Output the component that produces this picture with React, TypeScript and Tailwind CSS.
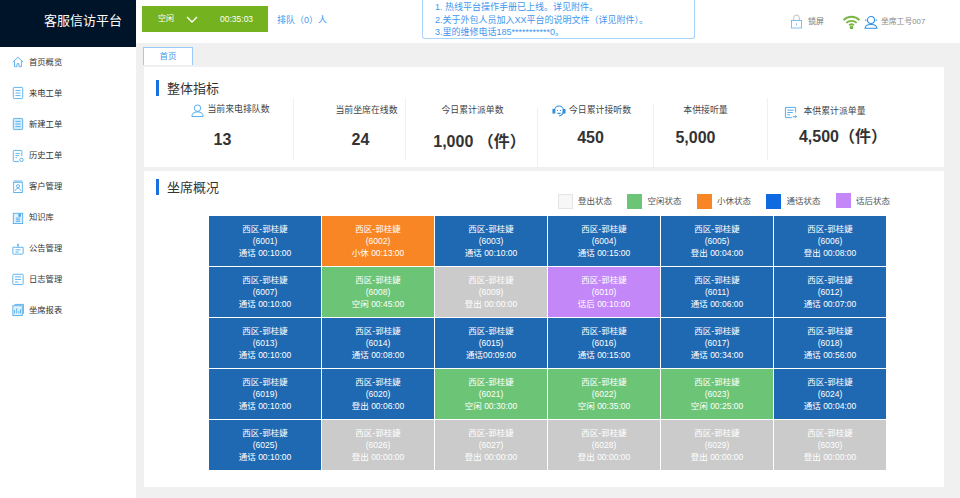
import type { ReactNode } from 'react';

const FONT = 'font-["Liberation_Sans","Noto_Sans_CJK_SC",sans-serif]';

type Status = 'call' | 'rest' | 'idle' | 'off' | 'after';

const cellBg: Record<Status, string> = {
  call: 'bg-[#1f69b3]',
  rest: 'bg-[#f98625]',
  idle: 'bg-[#6cc576]',
  off: 'bg-[#cbcbcb]',
  after: 'bg-[#c387f8]',
};

const seats: [Status, string][] = [
  ['call', '通话 00:10:00'],
  ['rest', '小休 00:13:00'],
  ['call', '通话 00:10:00'],
  ['call', '通话 00:15:00'],
  ['call', '登出 00:04:00'],
  ['call', '登出 00:08:00'],
  ['call', '通话 00:10:00'],
  ['idle', '空闲 00:45:00'],
  ['off', '登出 00:00:00'],
  ['after', '话后 00:10:00'],
  ['call', '通话 00:06:00'],
  ['call', '通话 00:07:00'],
  ['call', '通话 00:10:00'],
  ['call', '通话 00:08:00'],
  ['call', '通话00:09:00'],
  ['call', '通话 00:15:00'],
  ['call', '通话 00:34:00'],
  ['call', '通话 00:56:00'],
  ['call', '通话 00:10:00'],
  ['call', '登出 00:06:00'],
  ['idle', '空闲 00:30:00'],
  ['idle', '空闲 00:35:00'],
  ['idle', '空闲 00:25:00'],
  ['call', '通话 00:04:00'],
  ['call', '通话 00:10:00'],
  ['off', '登出 00:00:00'],
  ['off', '登出 00:00:00'],
  ['off', '登出 00:00:00'],
  ['off', '登出 00:00:00'],
  ['off', '登出 00:00:00'],
];

function NavIcon({ children }: { children: ReactNode }) {
  return (
    <svg viewBox="0 0 14 16" fill="none" stroke="#4aa8ec" strokeWidth="1" className="w-[12px] h-[14px] shrink-0">
      {children}
    </svg>
  );
}

const navIcons: ReactNode[] = [
  <path d="M1 8 7 2.500 13 8M3 7v6.500h2.800V10h2.400v3.500H11V7" />,
  <>
    <rect x="1.500" y="1.500" width="11" height="13" rx="1" />
    <path d="M4 5h6M4 8h6M4 11h6" />
  </>,
  <>
    <rect x="1.500" y="1.500" width="11" height="13" rx="1" fill="#d5ebfb" />
    <path d="M4 5h6M4 8h6M4 11h6" />
  </>,
  <>
    <path d="M8 14.500H2.500a1 1 0 0 1-1-1v-11a1 1 0 0 1 1-1h8a1 1 0 0 1 1 1V8" />
    <path d="M4 5h5M4 7.500h4M4 10h2" />
    <circle cx="11" cy="12.500" r="2" />
  </>,
  <>
    <rect x="2" y="2.500" width="10" height="12" />
    <path d="M2 1h10" />
    <circle cx="7" cy="7" r="1.800" />
    <path d="M4 12.500c.5-2 1.500-3 3-3s2.500 1 3 3" />
  </>,
  <>
    <rect x="1.500" y="2.500" width="11" height="12" fill="#e3f1fc" />
    <path d="M4.500 8h5M4.500 10h5M4.500 12h5" />
    <rect x="8" y="3.500" width="2" height="2.500" fill="#4aa8ec" />
  </>,
  <>
    <path d="M1 6h12v7a1 1 0 0 1-1 1H2a1 1 0 0 1-1-1zM7 6V3.500" />
    <circle cx="7" cy="3" r=".7" fill="#4aa8ec" />
    <path d="M4 9h6M4 11.500h4" />
  </>,
  <>
    <rect x="1" y="2.500" width="12" height="12" rx="1" />
    <path d="M3.500 5.500h7M3.500 8.500h7M3.500 11.500h4" />
  </>,
  <>
    <rect x="1" y="3" width="11" height="11.500" fill="#e3f1fc" />
    <path d="M3 1.500h10.500v11M3 12V8M5.500 12V6M8 12V9M10 12V7" />
  </>,
];

const navItems: [string, string][] = [
  ['首页概览', 'h-[32px]'],
  ['来电工单', 'h-[30px]'],
  ['新建工单', 'h-[32px]'],
  ['历史工单', 'h-[31px]'],
  ['客户管理', 'h-[31px]'],
  ['知识库', 'h-[31px]'],
  ['公告管理', 'h-[31px]'],
  ['日志管理', 'h-[30px]'],
  ['坐席报表', 'h-[32px]'],
];

function Sidebar() {
  return (
    <aside className="w-[136px] shrink-0 bg-white pt-[3px]">
      {navItems.map(([label, h], i) => (
        <div key={label} className={`flex items-center gap-[5px] pl-[12px] ${h}`}>
          <NavIcon>{navIcons[i]}</NavIcon>
          <span className="text-[8.300px] text-[#333]">{label}</span>
        </div>
      ))}
    </aside>
  );
}

function Title({ children }: { children: ReactNode }) {
  return (
    <div className="flex items-center gap-[8px] h-[16px]">
      <span className="w-[3px] h-[16px] bg-[#1a6fe0]" />
      <span className="text-[13px] leading-none text-[#333]">{children}</span>
    </div>
  );
}

function Stat({
  label,
  value,
  icon,
  width,
  divider = 'mt-0 h-[62px]',
  labelClass = '',
  valueClass = 'mt-[12px]',
}: {
  label: string;
  value: string;
  icon?: ReactNode;
  width: string;
  divider?: string;
  labelClass?: string;
  valueClass?: string;
}) {
  return (
    <div className={`${width} flex`}>
      <div className="flex-1 flex flex-col items-center pt-[4px]">
        <div className={`flex items-center gap-[3px] h-[16px] text-[8.900px] text-[#444] ${labelClass}`}>
          {icon}
          {label}
        </div>
        <div className={`text-[16px] leading-[20px] font-bold text-[#333] whitespace-pre ${valueClass}`}>
          {value}
        </div>
      </div>
      <span className={`w-px bg-[#f0f0f0] ${divider}`} />
    </div>
  );
}

const legend: [string, string][] = [
  ['登出状态', 'bg-[#f7f7f7] border border-[#e4e4e4]'],
  ['空闲状态', 'bg-[#6cc576]'],
  ['小休状态', 'bg-[#f98625]'],
  ['通话状态', 'bg-[#0f6ae0]'],
  ['话后状态', 'bg-[#c387f8] -translate-y-[1px]'],
];

export default function App() {
  return (
    <div className={`w-[960px] h-[498px] overflow-hidden flex flex-col bg-[#f0f0f0] ${FONT}`}>
      {/* top bar */}
      <header className="h-[43px] shrink-0 bg-white flex items-start">
        <div className="w-[136px] h-[47px] bg-[#001429] text-white text-[13px] pl-[44px] pt-[13px] leading-[15px] z-10">
          客服信访平台
        </div>
        <div className="ml-[6px] mt-[6px] w-[126px] h-[26px] bg-[#74b21f] flex items-center text-white text-[8px] pl-[16px]">
          <span>空闲</span>
          <svg viewBox="0 0 12 7" className="w-[12px] h-[7px] ml-[12px]" fill="none" stroke="#fff" strokeWidth="1.300">
            <path d="M1 1l5 5 5-5" />
          </svg>
          <span className="ml-[22px] text-[8.500px]">00:35:03</span>
        </div>
        <div className="ml-[9px] mt-[14px] text-[9px] leading-[12px] text-[#3f97ee]">排队（0）人</div>
        <div className="ml-[95px] w-[273px] h-[39px] border-x border-b border-[#a8d3fb] rounded-b-[3px] pl-[12px] pt-[1px] text-[9px] leading-[12.500px] text-[#3f97ee]">
          <div>1. 热线平台操作手册已上线。详见附件。</div>
          <div>2.关于外包人员加入XX平台的说明文件（详见附件）。</div>
          <div>3.里的维修电话185***********0。</div>
        </div>
        <div className="ml-[95px] mt-[14px] flex items-center">
          <svg viewBox="0 0 14 16" className="w-[13px] h-[15px]" fill="none" stroke="#55abec" strokeWidth="0.800">
            <path d="M4 7V4a3 3 0 0 1 6 0v3" stroke="#aaa" />
            <rect x="1.500" y="7" width="11" height="8" />
            <path d="M7 10v2" />
          </svg>
          <span className="ml-[5px] text-[8px] text-[#777]">锁屏</span>
          <svg viewBox="0 0 20 16" className="ml-[18px] w-[19px] h-[15px]" fill="none" stroke="#78b545" strokeWidth="2">
            <path d="M1.500 6.500a12 12 0 0 1 17 0M4.500 9.500a8 8 0 0 1 11 0M7.500 12a4 4 0 0 1 5 0" />
            <circle cx="10" cy="14.500" r="1" fill="#78b545" />
          </svg>
          <svg viewBox="0 0 14 14" className="ml-[3px] w-[14px] h-[14px]" fill="none" stroke="#2f8fe0" strokeWidth="1.100">
            <circle cx="7" cy="5" r="3.500" />
            <path d="M1.800 6V4.500M12.200 6V4.500M1 13.300c.3-2.800 2-3.800 6-3.800s5.700 1 6 3.800z" />
          </svg>
          <span className="ml-[3px] text-[7.800px] text-[#888]">坐席工号007</span>
        </div>
      </header>

      <div className="flex flex-1 min-h-0">
        <Sidebar />
        <main className="flex-1 min-w-0 pl-[7px] pr-[16px] pt-[4px]">
          {/* tab */}
          <div className="w-[50px] h-[18px] bg-white border border-[#9ccbf7] border-b-0 flex items-center justify-center text-[8.500px] text-[#3f97ee]">
            首页
          </div>

          {/* overall metrics */}
          <section className="mt-[2px] ml-[1px] h-[100px] bg-white pl-[12px] pt-[13px]">
            <Title>整体指标</Title>
            <div className="flex mt-[2px] h-[69px]">
              <Stat
                width="w-[138px]"
                label="当前来电排队数"
                value="13"
                labelClass="ml-[12px]"
                valueClass="mt-[12px] mr-[4px]"
                icon={
                  <svg viewBox="0 0 14 14" className="w-[13px] h-[13px]" fill="none" stroke="#4aa8ec" strokeWidth="1">
                    <circle cx="7" cy="4.500" r="3.500" />
                    <path d="M1 13.500c0-3.500 2-5 6-5s6 1.500 6 5z" />
                  </svg>
                }
              />
              <Stat
                width="w-[112px]"
                label="当前坐席在线数"
                value="24"
                labelClass="ml-[34px] mt-[1px]"
                valueClass="mt-[11px] ml-[22px]"
              />
              <Stat
                width="w-[132px]"
                label="今日累计派单数"
                value="1,000 （件）"
                labelClass="mt-[1px] ml-[2px]"
                valueClass="mt-[13px] ml-[16px]"
                divider="mt-[10px] h-[59px]"
              />
              <Stat
                width="w-[116px]"
                label="今日累计接听数"
                value="450"
                labelClass="mt-[1px] -ml-[8px]"
                valueClass="mt-[9px] -ml-[10px]"
                divider="mt-[6px] h-[63px]"
                icon={
                  <svg viewBox="0 0 14 14" className="w-[14px] h-[14px]" fill="none" stroke="#2f8fe0" strokeWidth="1.100">
                    <path d="M2.500 6.500a4.500 4.500 0 0 1 9 0c0 3-2 5.500-4.500 5.500" />
                    <rect x="1" y="5.500" width="1.800" height="3.500" fill="#2f8fe0" />
                    <rect x="11.200" y="5.500" width="1.800" height="3.500" fill="#2f8fe0" />
                    <path d="M5.500 6v1M8.500 6v1M5.500 9c1 .8 2 .8 3 0" />
                  </svg>
                }
              />
              <Stat
                width="w-[114px]"
                label="本供接听量"
                value="5,000"
                labelClass="mt-[1px] -ml-[10px]"
                valueClass="mt-[9px] -ml-[30px]"
              />
              <Stat
                width="w-[160px]"
                divider="hidden"
                label="本供累计派单量"
                value="4,500（件）"
                labelClass="mt-[2px] mr-[46px]"
                valueClass="mt-[7px] mr-[10px]"
                icon={
                  <svg viewBox="0 0 14 14" className="w-[13px] h-[13px] mr-[3px]" fill="none" stroke="#4aa8ec" strokeWidth="1">
                    <path d="M12.500 7V1.500h-11v11h7M3.500 4.500h7M3.500 7h6M3.500 9.500h3M9.500 11.500h4M12 10l1.500 1.500L12 13" />
                  </svg>
                }
              />
            </div>
          </section>

          {/* seat overview */}
          <section className="mt-[4px] ml-[1px] h-[316px] bg-white pt-[8px]">
            <div className="pl-[12px]">
              <Title>坐席概况</Title>
            </div>
            <div className="flex justify-end gap-[15.500px] pr-[54px] -mt-[1px]">
              {legend.map(([label, box]) => (
                <div key={label} className="flex items-center gap-[5px]">
                  <span className={`w-[15px] h-[15px] box-border ${box}`} />
                  <span className="text-[8.500px] text-[#555]">{label}</span>
                </div>
              ))}
            </div>
            <div className="mt-[7px] ml-[65px] w-[677px] h-[254px] grid grid-cols-6 grid-rows-5 gap-px">
              {seats.map(([status, line], i) => (
                <div
                  key={i}
                  className={`flex flex-col items-center justify-center text-white text-[8.500px] leading-[12px] ${cellBg[status]}`}
                >
                  <div>西区-郭桂婕</div>
                  <div>({6001 + i})</div>
                  <div>{line}</div>
                </div>
              ))}
            </div>
          </section>
        </main>
      </div>
    </div>
  );
}
